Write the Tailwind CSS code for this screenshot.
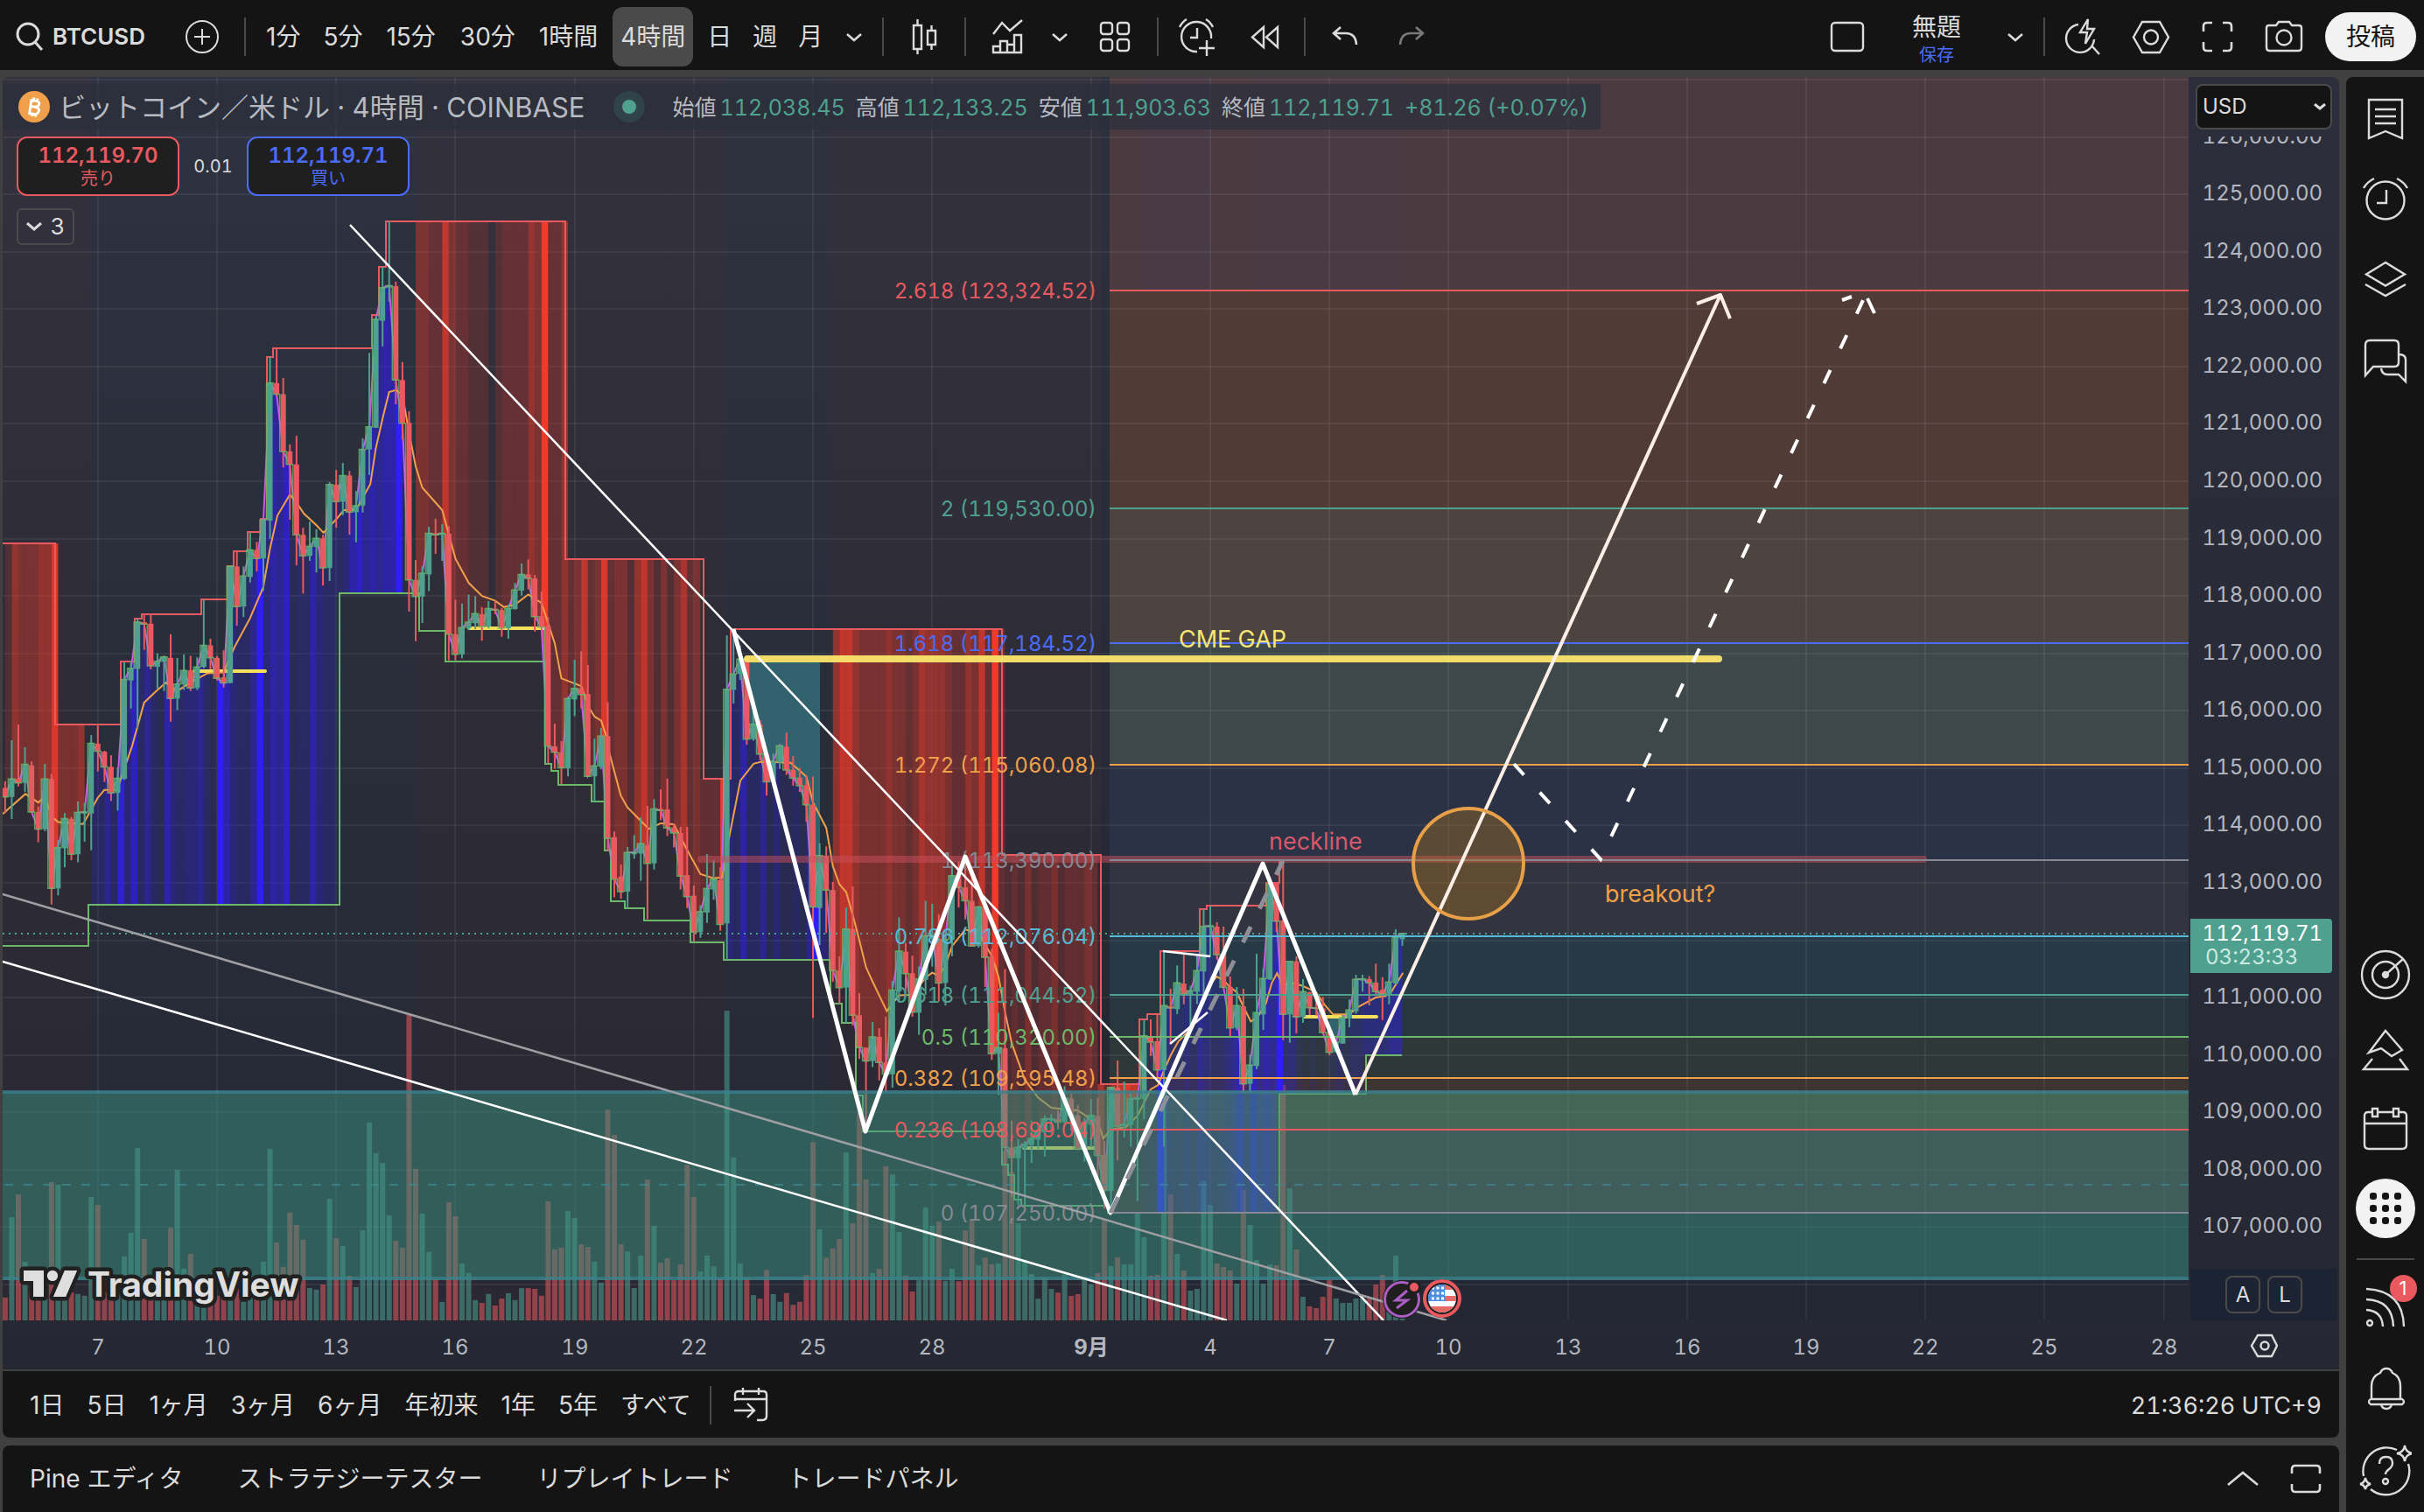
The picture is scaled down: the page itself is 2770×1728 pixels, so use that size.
<!DOCTYPE html>
<html lang="ja">
<head>
<meta charset="utf-8">
<title>BTCUSD</title>
<script src="https://cdn.jsdelivr.net/npm/@tailwindcss/browser@4"></script>
</head>
<body class="flex h-screen flex-col overflow-hidden bg-[#404040] font-['Inter','Noto_Sans_CJK_JP',sans-serif] text-[28px] leading-none text-[#dbdbdb]">

<header class="flex h-[80px] shrink-0 items-center bg-[#141414] pt-[4px] pr-[9px] pl-[17px] whitespace-nowrap">
  <button class="flex items-center gap-[9px] text-[26px] font-semibold">
    <svg class="size-[34px]" viewBox="0 0 34 34" fill="none" stroke="#dbdbdb" stroke-width="3"><circle cx="15" cy="14" r="12"/><path d="M23 23l8 9"/></svg>
    BTCUSD
  </button>
  <button class="ml-[43px]" aria-label="追加"><svg class="size-[44px]" viewBox="0 0 44 44" fill="none" stroke="#dbdbdb" stroke-width="2"><circle cx="22" cy="22" r="18"/><path d="M13 22h18M22 13v18"/></svg></button>
  <i class="ml-[26px] h-[44px] w-[2px] bg-[#4a4a4a]"></i>
  <nav class="ml-[14px] flex gap-[8px]">
    <button class="h-[68px] px-[9px]">1分</button>
    <button class="h-[68px] px-[9px]">5分</button>
    <button class="h-[68px] px-[10px]">15分</button>
    <button class="h-[68px] px-[10px]">30分</button>
    <button class="h-[68px] px-[9px]">1時間</button>
    <button class="h-[68px] rounded-[12px] bg-[#4a4a4a] px-[9px]">4時間</button>
    <button class="h-[68px] px-[8px]">日</button>
    <button class="h-[68px] px-[8px]">週</button>
    <button class="h-[68px] px-[8px]">月</button>
  </nav>
  <button class="ml-[10px]" aria-label="時間足"><svg class="size-[36px]" viewBox="0 0 36 36" fill="none" stroke="#dbdbdb" stroke-width="2.5"><path d="M10 15l8 7 8-7"/></svg></button>
  <i class="ml-[14px] h-[44px] w-[2px] bg-[#4a4a4a]"></i>
  <button class="mx-[18px]" aria-label="チャートタイプ"><svg class="size-[56px]" viewBox="0 0 56 56" fill="none" stroke="#dbdbdb" stroke-width="2.4"><path d="M16 15h9v27h-9zM20.5 8v7M20.5 42v6M32 21h9v16h-9zM36.5 15v6M36.5 37v6"/></svg></button>
  <i class="h-[44px] w-[2px] bg-[#4a4a4a]"></i>
  <button class="ml-[19px]" aria-label="インジケーター"><svg class="size-[56px]" viewBox="0 0 56 56" fill="none" stroke="#dbdbdb" stroke-width="2.4"><path d="M12 25l10-13 9 9L45 9M12 46V39h8v7zM20 46V33h8v13zM28 46V37h8v9zM36 46V26h8v20zM12 46h32"/></svg></button>
  <button class="ml-[14px]" aria-label="テンプレート"><svg class="size-[36px]" viewBox="0 0 36 36" fill="none" stroke="#dbdbdb" stroke-width="2.5"><path d="M10 15l8 7 8-7"/></svg></button>
  <button class="mr-[20px] ml-[17px]" aria-label="レイアウト"><svg class="size-[56px]" viewBox="0 0 56 56" fill="none" stroke="#dbdbdb" stroke-width="2.4"><rect x="12" y="12" width="13" height="13" rx="3"/><rect x="31" y="12" width="13" height="13" rx="3"/><rect x="12" y="31" width="13" height="13" rx="3"/><rect x="31" y="31" width="13" height="13" rx="3"/></svg></button>
  <i class="h-[44px] w-[2px] bg-[#4a4a4a]"></i>
  <button class="ml-[15px]" aria-label="アラート"><svg class="size-[56px]" viewBox="0 0 56 56" fill="none" stroke="#dbdbdb" stroke-width="2.4"><path d="M45 30A17 17 0 1 0 29 45M29 18v11h-8M9 17q3-6 8-9M39 8q5 3 8 9M40 32v18M31 41h18"/></svg></button>
  <button class="ml-[22px]" aria-label="リプレイ"><svg class="size-[56px]" viewBox="0 0 56 56" fill="none" stroke="#dbdbdb" stroke-width="2.4"><path d="M27 17v23L14 28.5zM43 17v23L30 28.5z"/></svg></button>
  <i class="ml-[17px] h-[44px] w-[2px] bg-[#4a4a4a]"></i>
  <button class="ml-[17px]" aria-label="元に戻す"><svg class="size-[56px]" viewBox="0 0 56 56" fill="none" stroke="#dbdbdb" stroke-width="2.6"><path d="M23 17l-8 7 8 7M15 24h14q11 0 12 13"/></svg></button>
  <button class="ml-[20px]" aria-label="やり直す"><svg class="size-[56px]" viewBox="0 0 56 56" fill="none" stroke="#7a7a7a" stroke-width="2.6"><path d="M33 17l8 7-8 7M41 24H27q-11 0-12 13"/></svg></button>

  <button class="ml-auto" aria-label="画面構成"><svg class="size-[56px]" viewBox="0 0 56 56" fill="none" stroke="#dbdbdb" stroke-width="2.4"><rect x="10" y="12" width="36" height="32" rx="4"/></svg></button>
  <button class="ml-[44px] flex w-[60px] flex-col items-center gap-[8px] pt-[6px]">無題<span class="text-[20px] text-[#4a6cf7]">保存</span></button>
  <button class="ml-[42px]" aria-label="メニュー"><svg class="size-[36px]" viewBox="0 0 36 36" fill="none" stroke="#dbdbdb" stroke-width="2.5"><path d="M10 15l8 7 8-7"/></svg></button>
  <i class="ml-[14px] h-[44px] w-[2px] bg-[#4a4a4a]"></i>
  <div class="mr-[19px] ml-[17px] flex gap-[20px]">
    <button aria-label="クイック検索"><svg class="size-[56px]" viewBox="0 0 56 56" fill="none" stroke="#dbdbdb" stroke-width="2.4"><path d="M21 14A16 16 0 1 0 39 31M36 38l9 10M32 8L23 23h8l-2 13 10-17h-8z"/></svg></button>
    <button aria-label="設定"><svg class="size-[56px]" viewBox="0 0 56 56" fill="none" stroke="#dbdbdb" stroke-width="2.4"><path d="M18 11h20l10 17.500L38 46H18L8 28.500z"/><circle cx="28" cy="28.5" r="8"/></svg></button>
    <button aria-label="全画面"><svg class="size-[56px]" viewBox="0 0 56 56" fill="none" stroke="#dbdbdb" stroke-width="2.6"><path d="M12 22v-6q0-4 4-4h6M34 12h6q4 0 4 4v6M44 34v6q0 4-4 4h-6M22 44h-6q-4 0-4-4v-6"/></svg></button>
    <button aria-label="スクリーンショット"><svg class="size-[56px]" viewBox="0 0 56 56" fill="none" stroke="#dbdbdb" stroke-width="2.4"><path d="M11 15h8l3-4h12l3 4h8q3 0 3 3v22q0 4-3 4H11q-3 0-3-4V18q0-3 3-3z"/><circle cx="28" cy="29" r="8.5"/></svg></button>
  </div>
  <button class="h-[56px] w-[104px] rounded-[28px] bg-[#f2f2f2] text-[#141414]">投稿</button>
</header>

<main class="flex min-h-0 flex-1 gap-[8px] pt-[8px]">
  <div class="flex min-w-0 flex-1 flex-col pl-[3px]">
    <section class="grid min-h-0 flex-1 grid-cols-[1fr_172px] grid-rows-[1fr_56px] overflow-hidden rounded-t-[8px] bg-linear-to-b from-[#2c2f3b] to-[#252833] tabular-nums">
      <div class="relative min-h-0 overflow-hidden">
        <svg id="chart" class="absolute inset-0 size-full text-[24px]" viewBox="3 88 2498 1421" preserveAspectRatio="xMinYMin slice" fill="none"></svg>
        <div class="absolute top-[8px] left-0 flex h-[52px] items-center bg-[#2b2f3b]/70 pr-[14px] pl-[18px] text-[25px] whitespace-nowrap text-[#b8bac2]">
          <svg class="size-[36px]" viewBox="0 0 36 36"><circle cx="18" cy="18" r="18" fill="#f0a04b"/><path d="M15 9.500l-2.500 17M14 10.500l7 1q4 1.500 2.500 4.500t-9 1.500q10 1 9 5t-5 4l-7-1M18 7.500l-.5 3M22 8.500l-.5 3M16 26l-.5 3M20 26.500l-.5 3" fill="none" stroke="#fff" stroke-width="2.800"/></svg>
          <h1 class="ml-[10px] text-[31px]">ビットコイン／米ドル · 4時間 · COINBASE</h1>
          <svg class="ml-[32px] size-[36px]" viewBox="0 0 36 36"><circle cx="18" cy="18" r="18" fill="#2f4349"/><circle cx="18" cy="18" r="8" fill="#4fa08f"/></svg>
          <dl class="ml-[32px] flex gap-[12px] pt-[2px]">
            <div class="flex gap-[4px]"><dt>始値</dt><dd class="text-[#4fa08f]">112,038.45</dd></div>
            <div class="flex gap-[4px]"><dt>高値</dt><dd class="text-[#4fa08f]">112,133.25</dd></div>
            <div class="flex gap-[4px]"><dt>安値</dt><dd class="text-[#4fa08f]">111,903.63</dd></div>
            <div class="flex gap-[4px]"><dt>終値</dt><dd class="text-[#4fa08f]">112,119.71</dd></div>
            <dd class="text-[#4fa08f]">+81.26 (+0.07%)</dd>
          </dl>
        </div>
        <div class="absolute top-[68px] left-[16px] flex items-center text-[20px]">
          <button class="flex h-[68px] w-[186px] flex-col items-center justify-center gap-[4px] rounded-[12px] border-2 border-[#e85a5f] bg-[#1f1f1f] text-[#e85a5f]"><b class="text-[24px] font-semibold">112,119.70</b>売り</button>
          <span class="w-[77px] text-center">0.01</span>
          <button class="flex h-[68px] w-[186px] flex-col items-center justify-center gap-[4px] rounded-[12px] border-2 border-[#4a6cf7] bg-[#1f1f1f] text-[#4a6cf7]"><b class="text-[24px] font-semibold">112,119.71</b>買い</button>
        </div>
        <button class="absolute top-[150px] left-[16px] flex h-[42px] w-[66px] items-center justify-center gap-[10px] rounded-[6px] border-2 border-[#4a4a4a] text-[26px]"><svg class="h-[10px] w-[18px]" viewBox="0 0 18 10" fill="none" stroke="#dbdbdb" stroke-width="3"><path d="M1 1l8 7 8-7"/></svg>3</button>
      </div>

      <div class="flex min-h-0 flex-col">
        <div class="relative h-[68px] shrink-0 px-[8px] pt-[8px]">
          <select aria-label="通貨" class="h-[52px] w-full appearance-none rounded-[8px] border-2 border-[#4a4a4a] bg-[#141414] pl-[6px] text-[24px]"><option>USD</option></select>
          <svg class="pointer-events-none absolute top-[30px] right-[15px] h-[8px] w-[14px]" viewBox="0 0 14 8" fill="none" stroke="#dbdbdb" stroke-width="3"><path d="M1 1l6 5 6-5"/></svg>
        </div>
        <svg id="prices" class="min-h-0 w-full flex-1 text-[24px]" viewBox="2501 156 172 1294" preserveAspectRatio="xMinYMin slice"></svg>
        <div class="mx-[2px] flex h-[59px] shrink-0 items-center justify-center gap-[8px] bg-[#1c2333] text-[24px]">
          <button class="h-[43px] w-[40px] rounded-[8px] border-2 border-[#4a4a4a]">A</button>
          <button class="h-[43px] w-[40px] rounded-[8px] border-2 border-[#4a4a4a]">L</button>
        </div>
      </div>

      <svg id="times" class="size-full text-[24px]" viewBox="3 1509 2498 56" preserveAspectRatio="xMinYMin slice"></svg>
      <button class="flex items-center justify-center" aria-label="軸の設定"><svg class="size-[32px]" viewBox="0 0 32 32" fill="none" stroke="#dbdbdb" stroke-width="2.4"><path d="M9 5h16l6 12-6 12H9L2 17z"/><circle cx="17" cy="17" r="4.5"/></svg></button>
    </section>

    <div class="flex h-[78px] shrink-0 items-center rounded-b-[8px] border-t-2 border-[#404040] bg-[#141414] pt-[2px] pr-[20px] pl-[31px] whitespace-nowrap">
      <nav class="flex gap-[26px]">
        <button>1日</button><button>5日</button><button>1ヶ月</button><button>3ヶ月</button><button>6ヶ月</button><button>年初来</button><button>1年</button><button>5年</button><button>すべて</button>
      </nav>
      <i class="ml-[21px] h-[44px] w-[2px] bg-[#4a4a4a]"></i>
      <button class="ml-[24px]" aria-label="日付へ移動"><svg class="size-[44px]" viewBox="0 0 44 44" fill="none" stroke="#dbdbdb" stroke-width="2.4"><path d="M3 17V10q0-4 4-4h28q4 0 4 4v24q0 5-5 5h-6M3 15h36M12 2v8M30 2v8M2 28h22M17 20l8 8-8 8"/></svg></button>
      <button class="ml-auto text-[27px] tabular-nums">21:36:26 UTC+9</button>
    </div>

    <footer class="mt-[9px] flex h-[76px] shrink-0 items-center gap-[62px] rounded-t-[8px] bg-[#141414] pr-[20px] pl-[31px] whitespace-nowrap">
      <button>Pine エディタ</button><button>ストラテジーテスター</button><button>リプレイトレード</button><button>トレードパネル</button>
      <div class="ml-auto flex gap-[36px]">
        <button aria-label="開く"><svg class="size-[36px]" viewBox="0 0 36 36" fill="none" stroke="#dbdbdb" stroke-width="2.6"><path d="M1 25l17-14 17 14"/></svg></button>
        <button aria-label="最大化"><svg class="size-[36px]" viewBox="0 0 36 36" fill="none" stroke="#dbdbdb" stroke-width="2.6"><path d="M2 12V7q0-4 4-4h24q4 0 4 4v5M34 24v5q0 4-4 4H6q-4 0-4-4v-5"/></svg></button>
      </div>
    </footer>
  </div>

  <aside class="flex w-[89px] shrink-0 flex-col items-center overflow-hidden rounded-tl-[8px] bg-[#141414] pt-[2px]">
    <button class="h-[92px] shrink-0" aria-label="ウォッチリスト"><svg class="size-[60px]" viewBox="0 0 60 60" fill="none" stroke="#dbdbdb" stroke-width="2.4"><path d="M11 8h38v44L30 44 11 52zM18 19h24M18 27h24M18 35h24"/></svg></button>
    <button class="h-[92px] shrink-0" aria-label="アラート"><svg class="size-[60px]" viewBox="0 0 60 60" fill="none" stroke="#dbdbdb" stroke-width="2.4"><circle cx="30" cy="31" r="21.5"/><path d="M31 19v15H20M5 17q4-7 12-11M43 6q8 4 12 11"/></svg></button>
    <button class="h-[92px] shrink-0" aria-label="オブジェクト"><svg class="size-[60px]" viewBox="0 0 60 60" fill="none" stroke="#dbdbdb" stroke-width="2.4"><path d="M30 10L8 23.500 30 36.500 52 23.500zM7 35l23 13 23-13"/></svg></button>
    <button class="h-[92px] shrink-0" aria-label="チャット"><svg class="size-[60px]" viewBox="0 0 60 60" fill="none" stroke="#dbdbdb" stroke-width="2.4"><path d="M7 47V12q0-5 5-5h28q5 0 5 5v20q0 5-5 5H16zM45 23q8 0 8 6v25l-8-8H32q-6 0-7-7"/></svg></button>
    <button class="mt-auto h-[88px] shrink-0" aria-label="スクリーナー"><svg class="size-[60px]" viewBox="0 0 60 60" fill="none" stroke="#dbdbdb" stroke-width="2.4"><circle cx="30" cy="30" r="27"/><circle cx="30" cy="30" r="15"/><circle cx="30" cy="30" r="3" fill="#dbdbdb"/><path d="M30 30l20-18"/></svg></button>
    <button class="h-[88px] shrink-0" aria-label="ボラティリティ"><svg class="size-[60px]" viewBox="0 0 60 60" fill="none" stroke="#dbdbdb" stroke-width="2.4"><path d="M30 6l19 22-12 7-12-9-14 5zM15 38L5 50h50L46 38"/></svg></button>
    <button class="h-[88px] shrink-0" aria-label="カレンダー"><svg class="size-[60px]" viewBox="0 0 60 60" fill="none" stroke="#dbdbdb" stroke-width="2.4"><path d="M15 11h-5q-4 0-4 4v33q0 5 5 5h38q5 0 5-5V15q0-4-4-4h-5M21 11h18M6 24h48M15 7h6v9h-6zM39 7h6v9h-6z"/></svg></button>
    <button class="mt-[13px] mb-[15px] size-[68px] shrink-0 rounded-full bg-[#f2f2f2] p-[14px]" aria-label="プロダクト"><svg class="size-[40px]" viewBox="0 0 40 40" fill="#141414"><rect x="2" y="2" width="8" height="8" rx="3"/><rect x="16" y="2" width="8" height="8" rx="3"/><rect x="30" y="2" width="8" height="8" rx="3"/><rect x="2" y="16" width="8" height="8" rx="3"/><rect x="16" y="16" width="8" height="8" rx="3"/><rect x="30" y="16" width="8" height="8" rx="3"/><rect x="2" y="30" width="8" height="8" rx="3"/><rect x="16" y="30" width="8" height="8" rx="3"/><rect x="30" y="30" width="8" height="8" rx="3"/></svg></button>
    <i class="mt-[8px] mb-[6px] h-[2px] w-[66px] shrink-0 bg-[#4a4a4a]"></i>
    <button class="relative h-[94px] shrink-0" aria-label="フィード"><svg class="size-[60px]" viewBox="0 0 60 60" fill="none" stroke="#dbdbdb" stroke-width="2.4"><circle cx="12" cy="49" r="3"/><path d="M8 34q18 1 19 19M8 22q30 1 31 31M8 10q42 2 43 43"/></svg><span class="absolute top-[11px] left-[35px] h-[31px] w-[31px] rounded-full bg-[#e85a5f] text-center text-[22px] leading-[31px] text-white">1</span></button>
    <button class="h-[94px] shrink-0" aria-label="通知"><svg class="size-[60px]" viewBox="0 0 60 60" fill="none" stroke="#dbdbdb" stroke-width="2.4"><path d="M14 42V27q0-11 10-15 2-5 7-5t7 5q9 4 9 15v15M13 42h36q2 1 2 3t-2 3H13q-2-1-2-3t2-3zM25 48q1 5 6 5t6-5"/></svg></button>
    <button class="h-[94px] shrink-0" aria-label="ヘルプ"><svg class="size-[60px]" viewBox="0 0 60 60" fill="none" stroke="#dbdbdb" stroke-width="2.4"><path d="M43 6A27 27 0 0 0 5 36M13 51a27 27 0 0 0 43-29M23 22q0-8 7.500-8t7.500 7q0 4-4 7t-4 6M52 1q1 8 9 9-8 1-9 9-1-8-9-9 8-1 9-9zM7 38q1 6 6 7-5 1-6 6-1-5-6-6 5-1 6-7z"/><circle cx="30" cy="42" r="3"/></svg></button>
  </aside>
</main>

<script>
const priceY = p => 332 + (123324.52 - p) * 0.06557;
const barX = k => 111.8 + 7.567 * k;
const UP = '#4fa08f', DOWN = '#e85a5f';

// Candle blocks: scale, offset, rows of "open close high low".
const blocks = [
 [1.742, 230, '1168 1186 1155 1218,1186 1150 1073 1230,1150 1158 1042 1165,1158 1121 1087 1176,1123 1216 1115 1218,1216 1250 1205 1276,1250 1150 1120 1254,1150 1368 1140 1400,1368 1287 1272 1382,1288 1229 1218 1326,1230 1300 1226 1312,1300 1217 1195 1316,1219 1216 1198 1275,1219 1079 1063 1292,1080 1095 1042 1135,1096 1126 1094 1156,1126 1178 1103 1194,1178 1149 1128 1213,1150 952 918 1152,954 930 915 1010,931 838 831 1050,838 842 823 893,841 925 823 932,927 916 900 970,917 907 905 975,909 990 862 1036,990 961 909 1013,962 934 902 973,934 969 905 975,969 927 908 973,927 884 793 930,884 909 871 932,909 950 905 954,948 959 894 968,959 727 727 960,727 807 698 845,807 746 727 828,748 694 659 759,694 711 678 737,711 634 632 776,636 362 310 672,362 384 293 388,384 498 352 530,498 524 484 634,524 664 467 725,664 706 650 781,706 687 638 716,688 671 653 739,671 730 664 765,730 564 559 756,564 598 535 650,598 546 521 625,546 619 537 664,619 606 577 679,606 494 472 620,494 449 302 545,451 235 228 451,238 172 131 289,172 168 40 200,169 356 160 404,356 442 320 475,441 754 418 817,754 787 714 876,787 741 727 840,743 661 648 776,661 664 632 702,664 661 643 716,662 862 647 914,862 902 793 914,902 849 801 910,850 838 783 854,840 821 786 852,822 847 808 875,847 811 796 850,811 814 795 822,814 850 810 867,850 811 803 871,812 774 760 813,775 743 721 785,743 751 713 773,751 827 744 857,826 848 777 850,845 1085 828 1119,1085 1097 1040 1130,1097 1128 1075 1160,1129 990 987 1145,992 970 913 1025,970 982 896 1010,981 1145 923 1146,1145 1124 1070 1195,1126 1065 1049 1131'],
 [1.7043, 600, '411 610 345 635,608 690 597 725,685 714 661 728,714 638 627 746,640 638 604 650,640 621 569 693,624 659 547 768,659 553 534 671,553 556 515 575,554 590 494 606,589 600 581 628,600 684 588 710,682 724 588 746,722 793 702 811,793 753 741 804,755 708 641 775,710 690 653 730,692 778 667 790,776 320 215 846,321 290 205 348,290 261 235 302,261 417 255 428,417 388 360 420,388 446 380 458,446 500 438 527,500 460 445 510,462 430 430 475,432 477 404 487,477 493 450 508,492 508 473 520,507 545 488 578,545 744 490 960,746 644 620 818,644 711 626 795,711 868 695 890,868 901 840 932,901 787 745 970,787 955 704 975,955 1018 912 1040,1018 1044 1018 1180,1044 997 968 1056,997 1047 980 1082,1047 1070 958 1104,1070 906 888 1096,908 830 764 930,831 874 814 915,873 949 839 958,950 884 860 993,886 800 732 915,803 800 738 860,806 892 758 928,892 807 790 936,808 683 655 840,683 706 655 745,706 732 643 768,732 820 684 820,820 744 742 823,744 842 740 900,840 1030 825 1042,1030 1018 950 1110,1019 1212 865 1245,1212 1232 1160 1310,1233 1212 1196 1325,1214 1206 1200 1325,1208 1195 1160 1243,1197 1180 1165 1215,1183 1157 1150 1230,1160 1157 1147 1185,1157 1163 1140 1177,1163 1116 1093 1170,1117 1150 1108 1180,1150 1215 1130 1218,1215 1165 1155 1240,1168 1150 1118 1212,1151 1228 1116 1270,1227 1296 1200 1332'],
 [3, 960, '1203 848 848 1280,850 982 756 1098,978 975 828 1020,977 888 870 1052,888 885 880 1238,887 671 616 957,673 693 615 741,690 788 598 820,788 568 380 1050,570 576 510 700,580 490 430 597,492 528 390 563,528 517 500 655,520 448 397 562,451 296 237 560,297 294 226 400,297 393 282 410,390 505 297 510,503 644 468 672,644 568 504 652,570 836 510 868,836 772 736 866,775 592 390 786,598 475 442 651,478 150 147 480,150 278 147 315,276 598 72 686,598 416 414 695,416 607 399 663,607 520 477 627,522 575 520 600,574 577 550 602,577 660 538 664,657 728 655 738,727 692 690 730,698 609 600 698,612 583 547 642,587 478 462 595,479 476 462 520,477 490 467 567,489 520 424 535,514 528 470 617,528 487 424 563,492 333 306 495,340 320 318 363']
];
const volumes = [
 [2.42, 1080, '975 753 690 876 960 960 960 656 663 960 961 965 970 697 719 960 965 960 861 796 561 813 960 965 965 782 622 895 854 985 985 975 970 965 960 950 987 960 955 876 564 823 890 740 774 815 949 953 939 702 811 832 915 946 789 491 576 603 748 818 837 193 619 743 849 924 987 711 750 881 907 982 990 965 997 978 963 982 949 949 951 970 709 842 837 736 755 828 835 876 934'],
 [1.7043, 600, '1139 1188 1401 1415 1486 1423 1275 1365 1437 1428 1471 1440 1246 1309 1454 1423 1444 1467 946 1232 1438 1466 1500 1507 1451 1498 1513 1496 1519 1513 1461 1202 1372 1427 1409 1391 1222 1360 1145 1275 1457 1449 1249 1265 1377 1462 1493 1471 1329 1365 1357 1472 1449 1473 1374 1352 1442 1427 1440 1438 1220 1260 1360 1431 1459 1507 1467 1488 1495 1460'],
 [3, 1300, '543 537 480 503 465 282 441 411 435 435 256 342 474 471 -160 195 399 456 525 519 150 231 432 444 456 501 180 300 420 501 435 438 -180 174 384 546 579 585 546 489 552 567 567 552 552 552 504 471 560 405 620']
];
const candles = [], vol = [];
for (const [s, o, d] of blocks) for (const r of d.split(',')) candles.push(r.split(' ').map(v => v / s + o));
for (const [s, o, d] of volumes) for (const v of d.split(' ')) vol.push(v / s + o);
const at = k => candles[k + 14];

const upper = [[3,621],[63,828],[138,756],[154,707],[162,702],[230,685],[260,647],[267,630],[283,608],[298,593],[305,408],[312,398],[425,360],[433,305],[441,253],[646,639],[804,890],[835,719],[1145,977],[1258,1239],[1302,1165],[1311,1165],[1311,1159],[1326,1087],[1371,1039],[1379,1035],[1447,1009],[1462,984]];
const lower = [[3,1081],[101,1034],[388,678],[479,721],[509,756],[623,873],[630,881],[638,897],[676,916],[691,972],[698,1030],[714,1038],[736,1052],[789,1077],[827,1097],[949,1147],[962,1169],[978,1252],[986,1293],[1145,1331],[1152,1343],[1159,1371],[1167,1378],[1266,1386],[1462,1250],[1561,1206]];
const level = (steps, x) => steps.filter(s => s[0] <= x).pop()[1];
const stepPath = (steps, end) => 'M' + steps[0] + steps.slice(1).map(s => 'H' + s[0] + 'V' + s[1]).join('') + (end ? 'H' + end : '');

let h = '';
const rect = (x, y, w, hh, f, o = 1) => { h += `<rect x="${x}" y="${y}" width="${w}" height="${hh}" fill="${f}" fill-opacity="${o}"/>`; };
const line = (d, c, w = 2, extra = '') => { h += `<path d="${d}" stroke="${c}" stroke-width="${w}" ${extra}/>`; };
const text = (x, y, t, c, extra = '') => { h += `<text x="${x}" y="${y}" fill="${c}" ${extra}>${t}</text>`; };

// Trend background
h += '<defs><linearGradient id="fade" x1="0" y1="0" x2="0" y2="1"><stop offset="0" stop-color="#3a3d4c" stop-opacity=".35"/><stop offset="1" stop-color="#1c1f2a" stop-opacity=".25"/></linearGradient></defs>';
rect(3, 88, 2498, 1421, '#2e2b35');
rect(103, 88, 372, 1421, '#282d3a');
rect(828, 88, 120, 1421, '#282d39');
rect(1258, 88, 1243, 1421, '#262a36');
rect(3, 88, 2498, 1421, 'url(#fade)');

// Retracement zones
const zones = [[88,332,'#4b3b40'],[332,581,'#503b37'],[581,735,'#4d443f'],[735,874,'#3e484a'],[874,983,'#2b3246'],[983,1068,'#33343f'],[1068,1137,'#283946'],[1137,1185,'#28373e'],[1185,1232,'#2e3838'],[1232,1291,'#3d3532'],[1247,1291,'#4a3b2e'],[1291,1386,'#442736']];
for (const [a, b, c] of zones) rect(1268, a, 1233, b - a, c);
rect(1305, 88, 80, 244, '#473c48', .7);
rect(1430, 88, 170, 244, '#483b47', .5);

// Grid
for (let p = 106000; p <= 127000; p += 1000) line(`M3 ${Math.round(priceY(p))}H2501`, '#fff', 2, 'stroke-opacity=".06"');
const days = [[0,'7'],[18,'10'],[36,'13'],[54,'16'],[72,'19'],[90,'22'],[108,'25'],[126,'28'],[150,'9月'],[168,'4'],[186,'7'],[204,'10'],[222,'13'],[240,'16'],[258,'19'],[276,'22'],[294,'25'],[312,'28']];
for (const [k] of days) line(`M${Math.round(barX(k))} 88V1509`, '#fff', 2, 'stroke-opacity=".06"');

// Volume
vol.forEach((y, i) => { const c = candles[i]; rect(barX(i - 14) - 3, y, 6, 1509 - y, c[1] < c[0] ? UP : DOWN, .55); });

// Trend strength fills, one digit per bar
const fill = (start, digits, steps, side, color, curve) => [...digits].forEach((d, i) => {
  if (d === '0' || !at(start + i + 1)) return;
  const x = barX(start + i), nx = barX(start + i + 1), e = level(steps, x + 4), a = at(start + i)[1], b = at(start + i + 1)[1];
  if (side === 'above' ? e > a : e < a) return;
  h += `<path d="M${x} ${e}H${nx}V${b}L${x} ${a}z" fill="${color}" fill-opacity="${(d / 9) ** curve}"/>`;
});
const RED = ['above', '#f23a2a', 1.15], BLUE = ['below', '#2f1dfa', 1.4];
fill(-14, '254445584445', upper, ...RED);
fill(48, '44337433222023333549335347348344257424246343339', upper, ...RED);
fill(111, '577544445443465554335473932324233423334363', upper, ...RED);
fill(153, '5787', upper, ...RED);
fill(-1, '33538473532643445329643359465723364333467565669', lower, ...BLUE);
fill(95, '4363352422325943', lower, ...BLUE);
fill(158, '2294334354334574756594421211232334444553', lower, ...BLUE);
[[98,108,756,937],[186,188,1162,1534]].forEach(([a, b, top, right]) => {
  let d = `M${barX(a)} ${top}H${right}V${at(b)[1]}`;
  for (let k = b; k >= a; k--) d += `L${barX(k)} ${at(k)[1]}`;
  h += `<path d="${d}z" fill="#31626d"/>`;
});

// Gap levels
for (const [a, b, y] of [[222,303,767],[536,621,718],[1170,1252,1312],[1490,1573,1162]]) line(`M${a} ${y}H${b}`, '#f5e05c', 4, 'stroke-linecap="round"');

// Channels
line(stepPath(upper), DOWN, 2);
line(stepPath(lower, 1602), '#6cb86a', 2);

// Averages
line('M' + candles.map((c, i) => barX(i - 14) + ' ' + c[1]).join('L'), '#c95be6', 2);
const ema = [
 [2.24, 0, 1.742, 230, '7,1220 65,1180 98,1197 115,1185 132,1225 149,1236 213,1240 250,1188 267,1172 300,1172 318,1130 338,1085 369,998 400,975 425,958 454,975 488,958 530,940 572,938 600,888 640,830 674,768 691,692 710,626 742,584 759,600 778,622 810,645 828,660 862,632 880,615 911,615 948,563 962,492 980,430 996,380 1013,376 1030,385 1047,460 1064,528 1081,570 1132,615 1166,712 1200,760 1234,786 1267,795 1290,808 1318,803 1352,783 1386,800 1420,880 1437,950 1488,965 1505,1005 1522,1026 1539,1034 1556,1075'],
 [2.24, 600, 1.7043, 600, '211,430 245,527 262,550 296,576 317,592 347,581 381,583 415,633 449,680 483,688 505,686 522,610 551,498 585,465 605,461 680,463 720,490 737,540 771,590 788,665 805,700 822,715 839,760 856,810 873,862 890,890 926,947 957,916 991,915 1025,882 1042,872 1059,878 1076,858 1093,820 1127,788 1161,795 1195,840 1212,880 1229,950 1246,1010 1279,1080 1313,1115 1347,1135 1381,1138 1415,1140 1449,1158 1466,1160 1480,1195'],
 [3, 1220, 3, 960, '148,992 200,985 240,945 285,855 310,840 330,790 355,735 380,690 430,640 460,555 489,495 511,468 534,480 557,505 580,522 602,570 628,622 650,610 680,560 700,490 718,457 738,500 760,490 800,498 850,520 885,570 910,598 965,598 1000,570 1056,540 1090,535 1110,520 1150,455']
].flatMap(([sx, ox, sy, oy, d]) => d.split(' ').map(p => { const [x, y] = p.split(',').map(Number); return (x / sx + ox) + ' ' + (y / sy + oy); }));
line('M' + ema.join('L'), '#f0a04b', 2);

// Candles
candles.forEach((c, i) => {
  const x = barX(i - 14), [o, cl, hi, lo] = c, col = cl < o ? UP : DOWN;
  rect(x - 1, hi, 2, lo - hi, col);
  rect(x - 3, Math.min(o, cl), 6, Math.max(2, Math.abs(o - cl)), col);
});
let follow = '';
candles.forEach((c, i) => { const x = barX(i - 14) - 4; follow += (i ? 'V' : 'M' + x + ' ') + c[1] + 'H' + (x + 7.567); });
line(follow, '#6cb86a', 1.5, 'stroke-opacity=".8"');

// Demand zone
rect(3, 1247, 2498, 216, '#3c9180', .5);
line('M3 1248H2501M3 1461H2501', '#3b8290', 4, 'stroke-opacity=".7"');
line('M5 1354H2501', '#3f8c98', 2, 'stroke-dasharray="10 12" stroke-opacity=".7"');

// Retracement levels
const fibs = [['2.618',123324.52,DOWN],['2',119530,'#4fa08f'],['1.618',117184.52,'#4a6cf7'],['1.272',115060.08,'#f0a04b'],['1',113390,'#868993'],['0.786',112076.04,'#5bb8d4'],['0.618',111044.52,'#4fa08f'],['0.5',110320,'#6cb86a'],['0.382',109595.48,'#f0a04b'],['0.236',108699.04,DOWN],['0',107250,'#868993']];
line('M801 982H2198', '#c9505c', 8, 'stroke-opacity=".5" stroke-linecap="round"');
for (const [r, p, c] of fibs) {
  const y = Math.round(priceY(p));
  line(`M1268 ${y}H2501`, c, 2);
  text(1253, y + 9, `${r} (${p.toLocaleString('en-US', { minimumFractionDigits: 2 })})`, c, 'text-anchor="end"');
}
line('M3 1067H2501', '#4fa08f', 2, 'stroke-dasharray="2 5"');

// Drawings
line('M854 753H1964', '#fbe56b', 8, 'stroke-linecap="round" stroke-opacity=".95"');
line('M400 257L1581 1509M3 1099L1402 1509M1329 1087L1383 1093M1337 1193L1380 1157', '#fff', 2.5);
line('M3 1022L1653 1509', '#a0a0a4', 2.5);
line('M838 719L989 1293L1103 979L1269 1386L1443 987L1549 1251', '#fff', 5, 'stroke-linejoin="round"');
h += '<circle cx="1678" cy="987" r="63" fill="#a8701c" fill-opacity=".38"/>';
line('M1549 1251L1966 337M1939 347L1966 337L1977 364', '#fdeee6', 4, 'stroke-linejoin="round"');
h += '<circle cx="1678" cy="987" r="63" stroke="#e8a048" stroke-width="4"/>';
line('M1269 1386L1466 984', '#8d8f98', 5, 'stroke-dasharray="20 23"');
line('M1730 873L1829 982L2130 341', '#fff', 4, 'stroke-dasharray="17 27"');
line('M2105 343L2116 339M2134 341L2142 358', '#fff', 4);
text(1347, 740, 'CME GAP', '#f5e676', 'font-size="27"');
text(1450, 971, 'neckline', '#d6596c', 'font-size="27"');
text(1834, 1031, 'breakout?', '#f0a04b', 'font-size="27"');

// Brand mark
h += `<g fill="#dedede" stroke="#212121" stroke-width="9" stroke-linejoin="round" paint-order="stroke"><path d="M27 1452h23v30H38v-18H27z"/><path d="M74 1452h14l-13 30H61z"/><circle cx="60" cy="1458" r="6"/><text x="100" y="1482" font-size="39" font-weight="700">TradingView</text></g><path d="M27 1452h23v30H38v-18H27zM74 1452h14l-13 30H61z" fill="#dedede"/><circle cx="60" cy="1458" r="6" fill="#dedede"/>`;

// Event badges
h += `<circle cx="1602" cy="1485" r="22" fill="#1f1f1f"/><circle cx="1602" cy="1485" r="19.5" stroke="#ab5fc4" stroke-width="3"/><path d="M1608 1475L1595 1486H1608L1596 1495" stroke="#ab5fc4" stroke-width="3"/><circle cx="1616" cy="1471" r="8" fill="#1f1f1f"/><circle cx="1616" cy="1471" r="5" fill="${DOWN}"/>
<circle cx="1648" cy="1484" r="22" fill="#1f1f1f"/><circle cx="1648" cy="1484" r="20" stroke="${DOWN}" stroke-width="4"/><clipPath id="disc"><circle cx="1648" cy="1484" r="16"/></clipPath><g clip-path="url(#disc)"><rect x="1630" y="1468" width="36" height="33" fill="#fff"/><rect x="1630" y="1468" width="36" height="6" fill="#e56b66"/><rect x="1630" y="1481" width="36" height="6" fill="#e56b66"/><rect x="1630" y="1493" width="36" height="8" fill="#e56b66"/><rect x="1630" y="1467" width="21" height="20" fill="#4b8fe0"/><path d="M1636 1472h14M1636 1478h14M1636 1484h14" stroke="#fff" stroke-width="3" stroke-dasharray="3 2.5"/></g>`;
document.getElementById('chart').innerHTML = h;

h = '';
for (let p = 107000; p <= 126000; p += 1000) if (p !== 112000) text(2654, Math.round(priceY(p)) + 7, p.toLocaleString('en-US') + '.00', '#b5b7c0', 'text-anchor="end"');
h += '<path d="M2503 1050h158q4 0 4 4v54q0 4-4 4h-158z" fill="#4fa08f"/>';
text(2654, 1075, '112,119.71', '#fff', 'text-anchor="end"');
text(2520, 1102, '03:23:33', '#cdeae2');
document.getElementById('prices').innerHTML = h;

h = '';
for (const [k, t] of days) text(Math.round(barX(k)), 1548, t, '#b5b7c0', `text-anchor="middle"${t === '9月' ? ' font-weight="700"' : ''}`);
document.getElementById('times').innerHTML = h;
</script>
</body>
</html>
